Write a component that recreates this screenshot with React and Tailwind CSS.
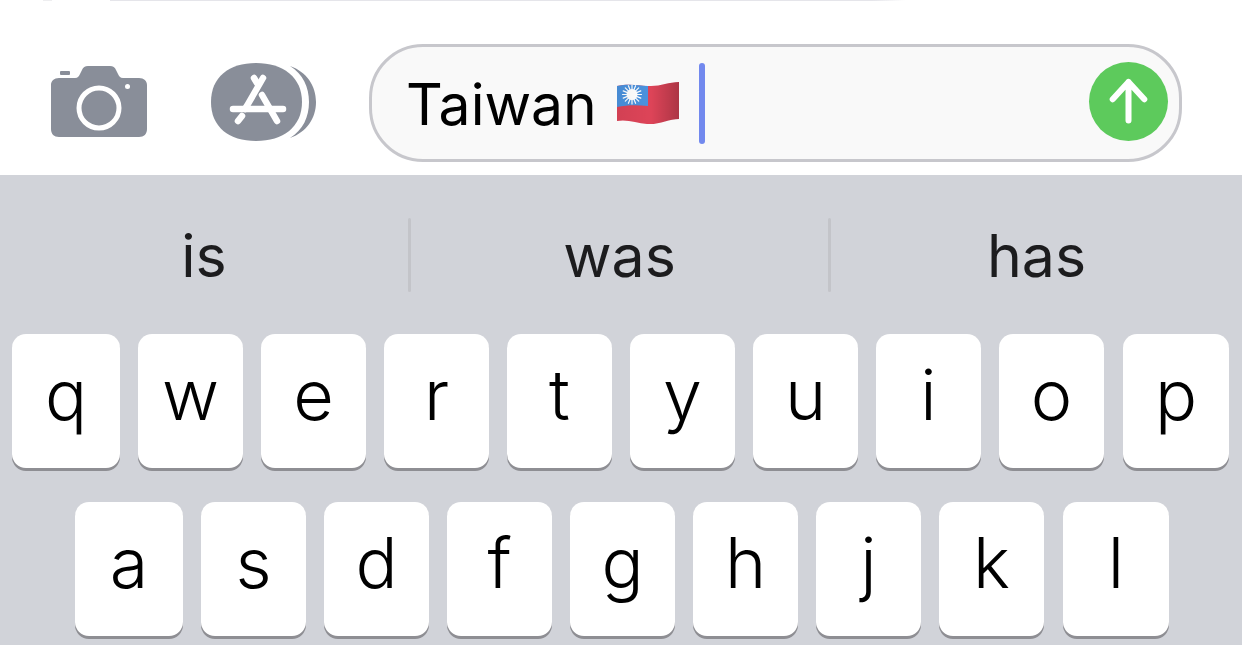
import React from 'react';

const FONT = { fontFamily: 'Inter, "Liberation Sans", sans-serif' };

// Largeurs relevées sur la capture
const rowOne = [
  { k: 'q', w: 'w-[108px]' },
  { k: 'w', w: 'w-[105px]' },
  { k: 'e', w: 'w-[105px]' },
  { k: 'r', w: 'w-[105px]' },
  { k: 't', w: 'w-[105px]' },
  { k: 'y', w: 'w-[105px]' },
  { k: 'u', w: 'w-[105px]' },
  { k: 'i', w: 'w-[105px]' },
  { k: 'o', w: 'w-[105px]' },
  { k: 'p', w: 'w-[106px] ml-px' },
];
const rowTwo = [
  { k: 'a', w: 'w-[108px]' },
  { k: 's', w: 'w-[105px]' },
  { k: 'd', w: 'w-[105px]' },
  { k: 'f', w: 'w-[105px]' },
  { k: 'g', w: 'w-[105px]' },
  { k: 'h', w: 'w-[105px]' },
  { k: 'j', w: 'w-[105px]' },
  { k: 'k', w: 'w-[105px]' },
  { k: 'l', w: 'w-[106px] ml-px' },
];

function Key({ k, w }) {
  return (
    <div className={`${w} h-[134px] shrink-0 bg-white rounded-[14px] shadow-[0_3px_0_#8e8e93] flex justify-center pt-[19px] text-[70px] font-[350] leading-[84px] text-black`}>
      {k}
    </div>
  );
}

function CameraIcon() {
  return (
    <svg width="96" height="72" viewBox="0 0 96 72" className="shrink-0 mb-[2px]">
      <rect x="9" y="5" width="10" height="4" rx="1" fill="#898e99" />
      <path d="M8 12H24C27 12 28 10 29 8L31 4C32 1.500 34 0 37 0H59C62 0 64 1.500 65 4L67 8C68 10 69 12 72 12H88C93 12 96 15 96 19V63C96 68 93 71 88 71H8C3 71 0 68 0 63V19C0 15 3 12 8 12Z" fill="#898e99" />
      <circle cx="48" cy="42" r="20" fill="none" stroke="#ffffff" strokeWidth="5" />
      <circle cx="76.500" cy="20.500" r="2.500" fill="#ffffff" />
    </svg>
  );
}

function AppStoreIcon() {
  return (
    <svg width="105" height="78" viewBox="0 0 105 78" className="shrink-0 ml-[64px] mb-[2px]">
      <path d="M45 0C72 0 91 14 91 39C91 64 72 78 45 78C18 78 0 64 0 39C0 14 18 0 45 0Z" fill="#898e99" />
      <path d="M79 3C96 9 105 23 105 39C105 55 96 69 79 75C92 67 98 54 98 39C98 24 92 11 79 3Z" fill="#898e99" />
      <g stroke="#ffffff" strokeWidth="6.500" strokeLinecap="round" fill="none">
        <path d="M52 15L37 41L34 46" />
        <path d="M43 15L46 20" />
        <path d="M51 32L66 58" />
        <path d="M22 46H72" />
        <path d="M31 53L27 58" />
      </g>
    </svg>
  );
}

function Flag() {
  return (
    <svg width="62" height="46" viewBox="0 0 62 46" className="shrink-0 ml-[20px]">
      <defs>
        <linearGradient id="flagShade" x1="0" x2="1" y1="0" y2="0">
          <stop offset="0" stopColor="#000000" stopOpacity="0.05" />
          <stop offset="0.55" stopColor="#000000" stopOpacity="0" />
          <stop offset="1" stopColor="#000000" stopOpacity="0.22" />
        </linearGradient>
      </defs>
      <path d="M0 6C12 3 24 6 34 6C44 6 52 2 62 2V39C52 39 42 45 30 44C20 43 10 39 0 41Z" fill="#dd4458" />
      <path d="M0 6C10 3.500 21 5 31 6V26C20 25 10 25 0 27Z" fill="#4b92de" />
      <g stroke="#ffffff" strokeWidth="1.200" strokeLinecap="round">
        <path d="M15 5V24M5.500 14.500H24.500M8.300 7.800L21.700 21.200M21.700 7.800L8.300 21.200M11.400 5.700L18.600 23.300M18.600 5.700L11.400 23.300M6.200 10.900L23.800 18.100M23.800 10.900L6.200 18.100" />
      </g>
      <circle cx="15" cy="14.500" r="5.500" fill="#ffffff" />
      <path d="M0 6C12 3 24 6 34 6C44 6 52 2 62 2V39C52 39 42 45 30 44C20 43 10 39 0 41Z" fill="url(#flagShade)" />
    </svg>
  );
}

export default function App() {
  return (
    <div className="w-[1242px] h-[645px] overflow-hidden flex flex-col bg-white" style={FONT}>
      {/* Zone de saisie */}
      <div className="h-[175px] shrink-0 flex flex-col">
        <div className="h-px flex">
          <div className="ml-[43px] w-[9px] bg-[#eeeef0]" />
          <div className="ml-[58px] w-[795px] bg-[linear-gradient(to_right,#e5e5ea_96%,#ffffff)]" />
        </div>
        <div className="flex items-center pl-[51px] mt-[43px]">
          <CameraIcon />
          <AppStoreIcon />
          <div className="ml-[53px] w-[813px] h-[118px] shrink-0 flex items-center rounded-[54px] border-[3px] border-[#c7c7cc] bg-[#f9f9f9] pl-[34px] pr-[11px] text-[57px] leading-none text-black">
            <span className="mt-[2px]">Taiwan</span>
            <Flag />
            <div className="w-[6px] h-[81px] ml-[20px] rounded-full bg-[#7289ee]" />
            <div className="ml-auto w-[79px] h-[79px] mb-[3px] rounded-full bg-[#5dca5c] flex items-center justify-center">
              <svg width="79" height="79" viewBox="0 0 79 79">
                <path d="M39.500 58.500V20M23.700 37.300L39.500 20L55.300 37.300" fill="none" stroke="#ffffff" strokeWidth="6" strokeLinecap="round" strokeLinejoin="round" />
              </svg>
            </div>
          </div>
        </div>
      </div>
      {/* Clavier */}
      <div className="flex-1 bg-[#d1d3d9]">
        <div className="h-[159px] flex">
          <div className="w-[408px] text-center text-[59px] leading-[162px] text-[#1c1c1e]">is</div>
          <div className="w-[3px] h-[74px] mt-[43px] rounded-full bg-[#c3c4c9]" />
          <div className="w-[417px] text-center text-[59px] leading-[162px] text-[#1c1c1e]">was</div>
          <div className="w-[3px] h-[74px] mt-[43px] rounded-full bg-[#c3c4c9]" />
          <div className="w-[411px] text-center text-[59px] leading-[162px] text-[#1c1c1e]">has</div>
        </div>
        <div className="flex gap-[18px] pl-[12px]">
          {rowOne.map((item) => <Key key={item.k} {...item} />)}
        </div>
        <div className="flex gap-[18px] pl-[75px] mt-[34px]">
          {rowTwo.map((item) => <Key key={item.k} {...item} />)}
        </div>
      </div>
    </div>
  );
}
